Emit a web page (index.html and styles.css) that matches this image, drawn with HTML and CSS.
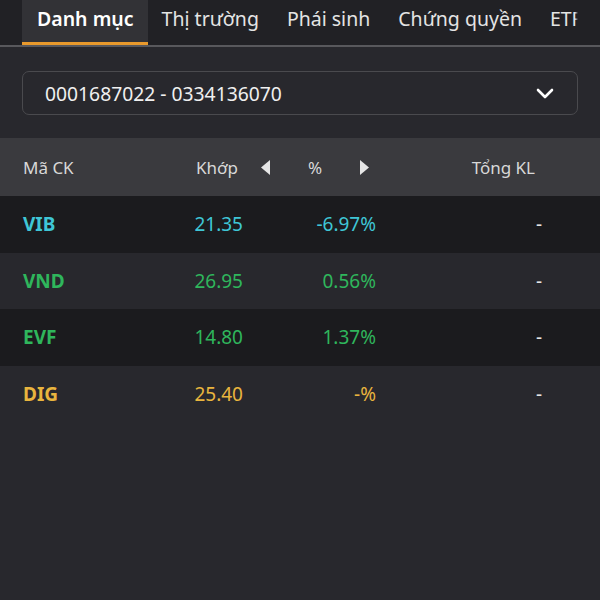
FILE: index.html
```html
<!DOCTYPE html>
<html lang="vi">
<head>
    <meta charset="UTF-8" />
    <title>Danh mục</title>
    <link rel="stylesheet" href="styles.css">
</head>
<body>
    <nav class="tabs">
        <a class="tab active">Danh mục</a>
        <a class="tab">Thị trường</a>
        <a class="tab">Phái sinh</a>
        <a class="tab">Chứng quyền</a>
        <a class="tab">ETF</a>
    </nav>

    <div class="account">
        <span>0001687022 - 0334136070</span>
        <svg class="chevron" width="18" height="11" viewBox="0 0 18 11">
            <path d="M2 2 L9 9 L16 2" fill="none" stroke="#fff" stroke-width="2.6" stroke-linecap="round" stroke-linejoin="round" />
        </svg>
    </div>

    <div class="grid head">
        <span>Mã CK</span>
        <span class="num price">Khớp</span>
        <span class="switch">
            <svg width="9" height="15" viewBox="0 0 9 15"><path d="M9 0 L0 7.5 L9 15 Z" fill="#e6e6e6" /></svg>
            <span>%</span>
            <svg width="9" height="15" viewBox="0 0 9 15"><path d="M0 0 L9 7.5 L0 15 Z" fill="#e6e6e6" /></svg>
        </span>
        <span class="num total">Tổng KL</span>
    </div>

    <div id="rows"></div>

    <script>
        const stocks = [
            { code: "VIB", price: "21.35", pct: "-6.97%", vol: "-", tone: "down" },
            { code: "VND", price: "26.95", pct: "0.56%", vol: "-", tone: "up" },
            { code: "EVF", price: "14.80", pct: "1.37%", vol: "-", tone: "up" },
            { code: "DIG", price: "25.40", pct: "-%", vol: "-", tone: "ref" }
        ];

        const rows = document.getElementById("rows");
        stocks.forEach(s => {
            const row = document.createElement("div");
            row.className = `grid row ${s.tone}`;
            row.innerHTML = `
                <span class="code">${s.code}</span>
                <span class="num">${s.price}</span>
                <span class="num">${s.pct}</span>
                <span class="num vol">${s.vol}</span>
            `;
            rows.appendChild(row);
        });
    </script>
</body>
</html>
```

FILE: styles.css
```css
html, body {
    height: 100%;
}

body {
    margin: 0;
    background: #28282d;
    color: #e6e6e6;
    font-family: 'Noto Sans', 'Open Sans', sans-serif;
    overflow: hidden;
}

.tabs {
    position: relative;
    display: flex;
    height: 45px;
    padding-left: 22px;
    background: #212125;
    border-bottom: 2px solid #58585c;
    white-space: nowrap;
    overflow: hidden;
}

/* fade out the tab that runs off the right edge */
.tabs::after {
    content: "";
    position: absolute;
    top: 0;
    right: 0;
    width: 25px;
    height: 100%;
    background: linear-gradient(to right, rgba(33, 33, 37, 0), #212125 3px);
}

.tab {
    display: flex;
    align-items: center;
    padding: 0 14px 9px 14px;
    font-size: 19.5px;
    color: #e4e4e4;
    box-sizing: border-box;
}

.tab.active {
    padding: 0 14px 6px 15px;
    background: #323236;
    border-bottom: 3px solid #e8992c;
    font-weight: 600;
    color: #fff;
}

.account {
    display: flex;
    align-items: center;
    justify-content: space-between;
    height: 44px;
    margin: 24px 22px 23px 22px;
    padding: 0 23px 0 22px;
    border: 1px solid #4a4a4e;
    border-radius: 7px;
    box-sizing: border-box;
    font-size: 19.3px;
    color: #f0f0f0;
}

.grid {
    display: grid;
    grid-template-columns: 147px 73px 133px 1fr;
    align-items: center;
    padding: 0 58px 0 23px;
    font-size: 19px;
}

.head {
    height: 58px;
    background: #3a3a3e;
    color: #d8d8d8;
    font-size: 17px;
}

.num {
    text-align: right;
}

.head .price {
    padding-right: 5px;
}

.switch {
    display: flex;
    align-items: center;
    justify-content: space-between;
    padding: 0 7px 0 18px;
}

.head .total {
    padding-right: 7px;
}

.row {
    height: 56.5px;
}

.row:nth-child(odd) {
    background: #1b1b1e;
}

.code {
    font-weight: 700;
}

.vol {
    color: #e6e6e6;
}

.down {
    color: #3fc6d6;
}

.up {
    color: #2fb65c;
}

.ref {
    color: #e9b53e;
}
```
